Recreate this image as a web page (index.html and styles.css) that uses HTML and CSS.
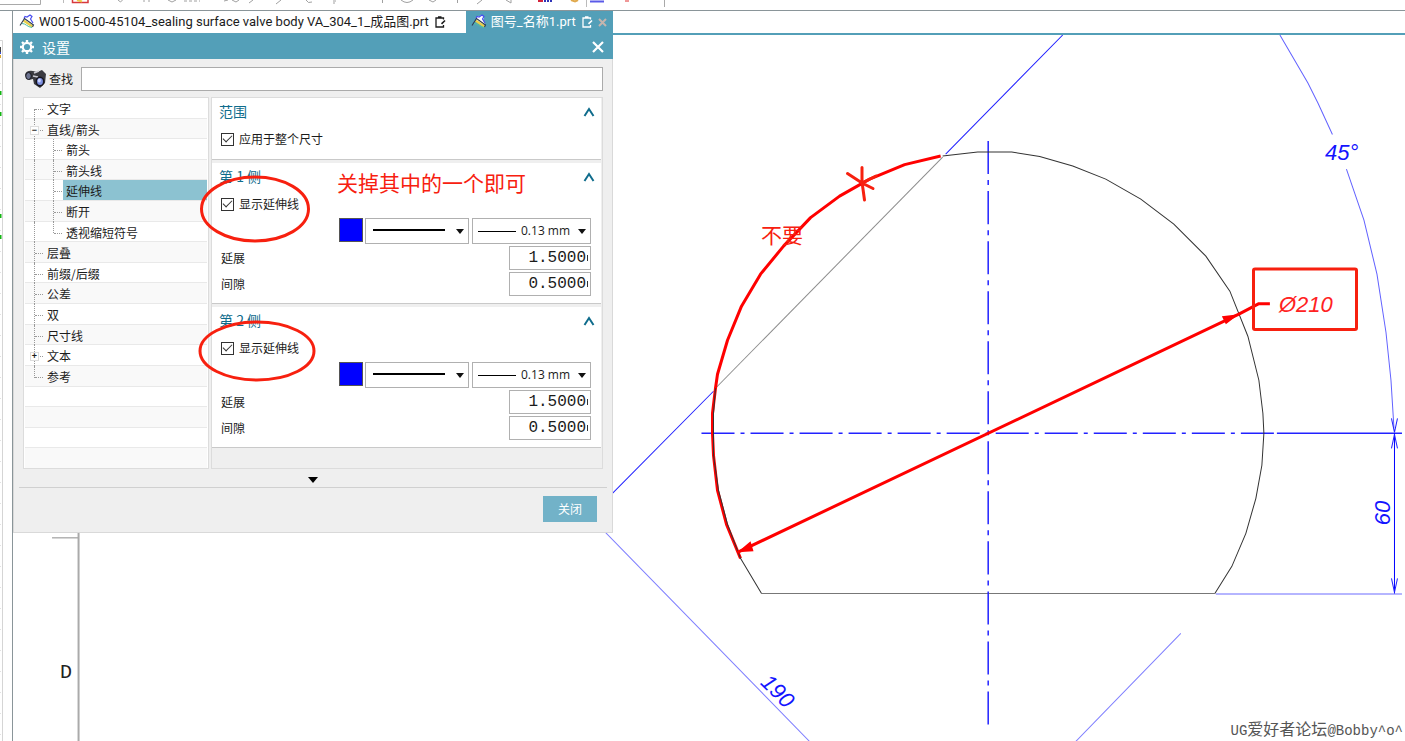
FILE: index.html
```html
<!DOCTYPE html>
<html lang="zh-CN">
<head>
<meta charset="utf-8">
<meta name="viewport" content="width=device-width, initial-scale=1">
<title>设置</title>
<link rel="stylesheet" href="styles.css">
</head>
<body>
<svg width="0" height="0" class="defs" aria-hidden="true">
  <symbol id="part" viewBox="0 0 16 16">
    <path d="M6 3l5-2 2 3-1 2 2 4-4 1-5-5z" fill="#fff"/>
    <path d="M5 4.500l1-2 2 .5 3-2 2 1.500-1.500 2.500 2.500 4" stroke="#4a4ff0" stroke-width="1.200" fill="none"/>
    <path d="M4.500 6.500l9 6" stroke="#e8cf4a" stroke-width="2.200" fill="none"/>
    <path d="M1 11.500L5.500 4.500l9 6.500-1 2" stroke="#2e3a52" stroke-width="1.100" fill="none"/>
    <path d="M3 9.500c4 0 5 3.500 10 4" stroke="#4fc0a0" stroke-width="1" fill="none"/>
  </symbol>
  <symbol id="modified" viewBox="0 0 12 12">
    <path d="M9.500 9v2h-7.500v-9h7.500v1.500M4 .8h3.500" stroke="currentColor" stroke-width="1.300" fill="none"/>
    <path d="M11 4.500L7.500 7.800" stroke="currentColor" stroke-width="1.600" fill="none"/>
  </symbol>
  <symbol id="up" viewBox="0 0 12 10">
    <path d="M1.500 9L6 2l4.500 7" stroke="#0f6c8c" stroke-width="2" fill="none"/>
  </symbol>
</svg>

<div class="app">
  <header class="toolbar">
    <svg width="700" height="10" viewBox="0 0 700 10" fill="none">
      <path d="M0 4.500H40.500V0M664.500 0V7" stroke="#a9a9a9"/>
      <path d="M63.500 0V3M586.500 0V7" stroke="#bbb"/>
      <path d="M72.500 0V2.500H88V0" stroke="#d8383c" stroke-width="1.500"/>
      <path d="M77 0l5 1.500" stroke="#eecb4b" stroke-width="2"/>
      <path d="M118 0l2.500 2 2-2M144 2V0M149 2V0M168 0l4 2 4-2M224 1l4-1M232 0l4 2 3-2M253 0l-4 3M281 0l-5 4M306 0q2 4 6 2M333 1h3M333 3h2M382.500 0V3M401 0q6 5 12 0M429 0l4 2 3-2M457.500 0V3M482 0l-5 4M506 0l5 3V0" stroke="#a0a0a0"/>
      <path d="M184 1h16" stroke="#a0a0a0" stroke-dasharray="3 2"/>
      <path d="M538 1h5" stroke="#d4223a" stroke-width="2"/><path d="M544 1h9" stroke="#2f34b8" stroke-width="2" stroke-dasharray="2 1"/>
      <path d="M571 0l4 1.500 3-1.500" stroke="#e0a94c" stroke-width="2"/>
      <path d="M590 1.500h14" stroke="#5a5ae8" stroke-width="2"/>
      <path d="M625 1h4" stroke="#e03030"/>
    </svg>
  </header>

  <div class="main">
    <aside class="rail">
      <svg width="13" height="730" viewBox="0 0 13 730" fill="none">
        <path d="M0 29.500H2.500V730" stroke="#d5d5d5"/>
        <path d="M0 36v5M0 42v1" stroke="#444" stroke-width="2"/><path d="M0 44v3" stroke="#d9a52e" stroke-width="2"/><path d="M0 41v2" stroke="#3b4dc4" stroke-width="2"/>
        <path d="M0 80v4M0 101v4M0 203v4M0 224v4" stroke="#13b513" stroke-width="3"/>
        <path d="M.5 72V730" stroke="#e2e2e2" stroke-dasharray="1 20"/>
      </svg>
    </aside>

    <section class="work">
      <nav class="tabs">
        <a class="tab" href="#part1"><svg width="16" height="16"><use href="#part"/></svg><span>W0015-000-45104_sealing surface valve body VA_304_1_成品图.prt</span><svg width="12" height="12"><use href="#modified"/></svg></a>
        <a class="tab active" href="#part2"><svg width="16" height="16"><use href="#part"/></svg><span>图号_名称1.prt</span><svg width="12" height="12"><use href="#modified"/></svg><svg class="tabx" width="9" height="9" viewBox="0 0 9 9"><path d="M1 1l7 7M8 1L1 8" stroke="#c4b5ae" stroke-width="2"/></svg></a>
      </nav>

      <div class="canvas">
        <svg class="drawing" viewBox="14 35 1391 706" preserveAspectRatio="xMinYMin meet" fill="none">
          <g stroke="#8c8c8c">
            <path d="M53 537.500H80"/>
            <path d="M79.500 532V741" stroke="#aaa" stroke-width="2"/>
            <path d="M943 157L716 388"/>
            <path d="M762 593H1215" stroke="#777"/>
          </g>
          <text class="zone" x="61" y="678">D</text>
          <g stroke="#2222ff">
            <path d="M1063 35L946 154M714 391L613 493"/>
            <path d="M606 532L810 741M1181 633L1076 741" stroke="#8080ff"/>
            <path d="M1216 593.500H1402" stroke="#9c9cff" stroke-width="1.500"/>
            <path d="M1280 35L1308 83L1318 103L1332.500 134.500M1346.500 169L1364 220L1377 274L1386 332L1391 380L1394 428" stroke="#6262ff"/>
            <path d="M988.500 141V725" stroke-width="1.500" stroke-dasharray="33 6 5 6"/>
            <path d="M702 433H1274" stroke-width="1.500" stroke-dasharray="33 6 4 6"/>
            <path d="M1277 433H1402" stroke-width="1.500"/>
            <path d="M1394.500 433V593" stroke="#0000ff"/>
            <path d="M1391.500 418l3 14 3-14M1391.500 448l3-14 3 14M1391.500 578l3 14 3-14"/>
          </g>
          <path d="M943 156L978 152H1012L1040 156.500L1073 166L1106 179L1141 199L1174 224L1206 256L1230 291L1248 336L1259 380L1263 413L1264 433L1262 465L1256 498L1246 533L1232 566L1215 593" stroke="#333"/>
          <path class="red" d="M941 156L905 164.500L870 179L840 196L811 217.500L784 246L761 274L742 306L728 340L718 374L716 388L713 413V433L714 455L718 490L727 524L741 558"/>
          <path d="M716 388L714 413V455L719 490L728 524L741 558L762 593" stroke="#333"/>
          <path class="red" d="M738 552L1239 314L1259 303.500H1270"/>
          <path d="M738 552l16-1-3-10zM1239 314l-13 10-4-8z" fill="#f00"/>
          <g class="dim">
            <text x="1325" y="160">45°</text>
            <text transform="translate(1390 525) rotate(-90)">60</text>
            <text transform="translate(760 683) rotate(45)">190</text>
            <text class="dia" x="1279" y="312">Ø210</text>
          </g>
        </svg>
        <p class="watermark">UG<span>爱好者论坛</span>@Bobby^o^</p>
      </div>
    </section>
  </div>

  <form class="dialog" aria-label="设置">
    <div class="title">
      <svg width="16" height="16" viewBox="0 0 16 16" fill="none" stroke="#fff"><circle cx="8" cy="8" r="4.200" stroke-width="2.200"/><path d="M8 1v2M8 13v2M1 8h2M13 8h2M3 3l1.500 1.500M11.500 11.500L13 13M13 3l-1.500 1.500M4.500 11.500L3 13" stroke-width="2.400"/></svg>
      <h1>设置</h1>
      <button type="button" class="close" aria-label="关闭对话框"><svg width="14" height="14" viewBox="0 0 14 14"><path d="M2 2l10 10M12 2L2 12" stroke="#fff" stroke-width="2.200"/></svg></button>
    </div>
    <div class="search">
      <svg width="24" height="20" viewBox="0 0 24 20">
        <path d="M1 6Q2 1 9 2l4 1 5-2 4 4-1 9-5 5-6-4-1-5-4 1z" fill="#3a3a40"/>
        <path d="M10 4l5-2M9 7l5 1" stroke="#c9c9d2" stroke-width="1.500"/>
        <ellipse cx="4.500" cy="7" rx="2.800" ry="3.500" fill="#6c7390" stroke="#15151c"/>
        <ellipse cx="16" cy="12.500" rx="3.700" ry="4.300" fill="#7d8fe0" stroke="#15151c" stroke-width="1.500"/>
        <ellipse cx="15.300" cy="11.500" rx="1.500" ry="2" fill="#ccd5ff"/>
      </svg>
      <label for="find">查找</label>
      <input id="find" type="text">
    </div>
    <div class="panes">
      <ul class="tree">
        <li><i class="g first"></i><span>文字</span></li>
        <li><i class="g tee"><button type="button" aria-label="折叠">−</button></i><span>直线/箭头</span></li>
        <li><i class="g pass"></i><i class="g tee"></i><span>箭头</span></li>
        <li><i class="g pass"></i><i class="g tee"></i><span>箭头线</span></li>
        <li><i class="g pass"></i><i class="g tee"></i><span class="selected">延伸线</span></li>
        <li><i class="g pass"></i><i class="g tee"></i><span>断开</span></li>
        <li><i class="g pass"></i><i class="g last"></i><span>透视缩短符号</span></li>
        <li><i class="g tee"></i><span>层叠</span></li>
        <li><i class="g tee"></i><span>前缀/后缀</span></li>
        <li><i class="g tee"></i><span>公差</span></li>
        <li><i class="g tee"></i><span>双</span></li>
        <li><i class="g tee"></i><span>尺寸线</span></li>
        <li><i class="g tee"><button type="button" aria-label="展开">+</button></i><span>文本</span></li>
        <li><i class="g last"></i><span>参考</span></li>
        <li></li><li></li><li></li><li></li>
      </ul>
      <div class="groups">
        <section class="group">
          <h2>范围<button type="button" aria-label="收起范围"><svg width="12" height="10"><use href="#up"/></svg></button></h2>
          <label class="check"><input type="checkbox" checked>应用于整个尺寸</label>
        </section>
        <section class="group">
          <h2>第 1 侧<button type="button" aria-label="收起第 1 侧"><svg width="12" height="10"><use href="#up"/></svg></button></h2>
          <label class="check"><input type="checkbox" checked>显示延伸线</label>
          <div class="style">
            <button type="button" class="swatch" aria-label="颜色"></button>
            <div class="combo font"><select aria-label="线型"><option></option></select></div>
            <div class="combo width"><select aria-label="线宽"><option>0.13 mm</option></select></div>
          </div>
          <div class="field"><label for="e1">延展</label><div class="num"><input id="e1" type="text" value="1.5000"></div></div>
          <div class="field"><label for="g1">间隙</label><div class="num"><input id="g1" type="text" value="0.5000"></div></div>
        </section>
        <section class="group">
          <h2>第 2 侧<button type="button" aria-label="收起第 2 侧"><svg width="12" height="10"><use href="#up"/></svg></button></h2>
          <label class="check"><input type="checkbox" checked>显示延伸线</label>
          <div class="style">
            <button type="button" class="swatch" aria-label="颜色"></button>
            <div class="combo font"><select aria-label="线型"><option></option></select></div>
            <div class="combo width"><select aria-label="线宽"><option>0.13 mm</option></select></div>
          </div>
          <div class="field"><label for="e2">延展</label><div class="num"><input id="e2" type="text" value="1.5000"></div></div>
          <div class="field"><label for="g2">间隙</label><div class="num"><input id="g2" type="text" value="0.5000"></div></div>
        </section>
      </div>
    </div>
    <div class="more"><svg width="10" height="6" viewBox="0 0 10 6"><path d="M0 0h10L5 6z"/></svg></div>
    <div class="footer"><button type="button">关闭</button></div>
  </form>

  <svg class="markup" viewBox="0 0 1405 741" preserveAspectRatio="xMinYMin meet" fill="none" stroke="#f7200f" stroke-width="3">
    <ellipse cx="255" cy="209" rx="53.500" ry="32"/>
    <ellipse cx="257" cy="351" rx="57" ry="29"/>
    <rect x="1253.500" y="269" width="103" height="60.500" rx="1.500"/>
    <path d="M862 167.500V182L864.500 200M847.500 173.500L862 183L873 188.500M862 183L876 176" stroke-linecap="round"/>
    <text x="337" y="191">关掉其中的一个即可</text>
    <text x="761" y="243">不要</text>
  </svg>
</div>
</body>
</html>
```
FILE: styles.css
```css
* { box-sizing: border-box; }
body {
  margin: 0;
  background: #fff;
  color: #1b1b1b;
  font: 12px/16px "Noto Sans CJK SC", sans-serif;
}
button, input, select { font: inherit; color: inherit; margin: 0; padding: 0; }
svg { display: block; flex: none; }
.defs { position: absolute; }

.app {
  position: relative;
  display: flex;
  flex-direction: column;
  height: 100vh;
  overflow: hidden;
}
.toolbar { flex: none; height: 11px; border-bottom: 1px solid #8a9599; overflow: hidden; }
.main { flex: 1; display: flex; min-height: 0; }
.rail { flex: none; width: 13px; border-right: 1px solid #8a9599; overflow: hidden; }
.work { flex: 1; min-width: 0; display: flex; flex-direction: column; }

.tabs { display: flex; flex: none; height: 24px; border-bottom: 2px solid #539fb8; }
.tab {
  display: flex;
  align-items: center;
  padding: 0 20px 0 6px;
  color: #1b1b1b;
  text-decoration: none;
  white-space: nowrap;
  font-size: 13px;
  font-family: Roboto, "Noto Sans CJK SC", sans-serif;
}
.tab span { margin: 0 5px 0 4px; }
.tab.active { background: #539fb8; color: #fff; padding: 0 6px 0 5px; }
.tabx { margin-left: 5px; }

.canvas { position: relative; flex: 1; min-height: 0; overflow: hidden; }
.drawing { width: 100%; height: auto; }
.red { stroke: #f00; stroke-width: 3; stroke-linejoin: round; }
.zone { font: 20px "Liberation Mono", monospace; fill: #222; }
.dim { font: italic 22px "Liberation Sans", sans-serif; fill: #1414ff; }
.dia { fill: #f22; }
.watermark {
  position: absolute;
  right: 2px;
  bottom: 1px;
  margin: 0;
  color: #555;
  font: 14px/18px "Liberation Mono", "Noto Sans CJK SC", monospace;
}
.watermark span { font-size: 16px; }

.dialog {
  position: absolute;
  left: 13px;
  top: 34px;
  width: 600px;
  background: #efefef;
  border: solid #d9d9d9;
  border-width: 0 1px 1px;
}
.title {
  display: flex;
  align-items: center;
  height: 25px;
  margin: 0 -1px;
  padding: 0 8px 0 6px;
  background: #539fb8;
  color: #fff;
}
.title h1 { flex: 1; margin: 0 0 0 7px; font-size: 14px; font-weight: 400; line-height: 20px; }
.close { border: 0; background: none; }

.search { display: flex; align-items: center; padding: 8px 9px 6px 10px; }
.search label { margin: 0 8px 0 1px; }
.search input { flex: 1; height: 24px; border: 1px solid #ababab; background: #fff; padding: 0 4px; }

.panes { display: flex; gap: 2px; margin: 0 9px; }
.tree {
  display: flex;
  flex-direction: column;
  flex: none;
  width: 186px;
  margin: 0;
  padding: 0 1px;
  list-style: none;
  border: 1px solid #dcdcdc;
  background: #fff;
}
.tree li { display: flex; flex: 1; min-height: 0; border-bottom: 1px solid #e9e9e9; line-height: 22px; }
.tree li:last-child { border: 0; }
.tree li:nth-child(even) { background: #f9f9f9; }
.tree li > span { flex: 1; padding-left: 3px; white-space: nowrap; }
.tree .selected { background: #8cc2d1; }
.g { position: relative; width: 19px; font-style: normal; }
.g::before, .g::after { content: ""; position: absolute; }
.g::before { left: 9px; top: 0; bottom: -1px; border-left: 1px dotted #999; }
.g::after { left: 10px; right: 1px; top: 11px; border-top: 1px dotted #999; }
.g.first::before { top: 11px; }
.g.last::before { bottom: 8px; }
.g.pass::after { display: none; }
.g button {
  position: absolute;
  z-index: 1;
  left: 5px;
  top: 7px;
  width: 9px;
  height: 9px;
  border: 1px solid #ddd;
  background: #fff;
  font: bold 9px/7px "Liberation Sans", sans-serif;
}

.groups {
  flex: 1;
  display: flex;
  flex-direction: column;
  gap: 3px;
  padding: 0 1px 20px 0;
  border: 1px solid #dcdcdc;
}
.group { padding: 0 10px 6px 8px; background: #fff; border-bottom: 1px solid #c9c9c9; }
.group h2 {
  display: flex;
  align-items: center;
  justify-content: space-between;
  margin: 0 -4px 0 -1px;
  color: #0f6c8c;
  font-size: 14px;
  font-weight: 400;
  line-height: 27px;
}
.group h2 button { border: 0; background: none; }
.check { display: flex; align-items: center; gap: 5px; height: 28px; }
.check input {
  appearance: none;
  display: grid;
  place-items: center;
  width: 13px;
  height: 13px;
  margin-left: 1px;
  border: 1px solid #333;
  background: #fff;
}
.check input:checked::after {
  content: "";
  width: 8px;
  height: 4px;
  margin-bottom: 3px;
  border: solid #333;
  border-width: 0 0 1px 1px;
  transform: rotate(-45deg);
}
.style { display: flex; justify-content: flex-end; gap: 3px; height: 27px; }
.swatch { width: 24px; height: 24px; margin-right: -1px; border: 1px solid #555; background: #00f; }
.combo { position: relative; display: flex; height: 26px; }
.font { width: 104px; }
.width { width: 119px; }
.combo select {
  appearance: none;
  width: 100%;
  border: 1px solid #b0b0b0;
  border-radius: 0;
  background: #fff;
  padding-left: 48px;
  font-family: "Open Sans", sans-serif;
}
.combo::before, .combo::after { content: ""; position: absolute; pointer-events: none; }
.combo::before { left: 8px; top: 11px; width: 72px; height: 2px; background: #000; }
.width::before { left: 6px; top: 13px; width: 38px; height: 1px; }
.combo::after {
  right: 5px;
  top: 11px;
  border: 4px solid transparent;
  border-top: 5px solid #111;
  border-bottom: 0;
}
.field { display: flex; align-items: center; justify-content: space-between; height: 26px; }
.field label { padding-left: 1px; }
.num { position: relative; width: 82px; }
.num input {
  display: block;
  width: 100%;
  height: 24px;
  border: 1px solid #b0b0b0;
  background: #fff;
  padding-right: 4px;
  text-align: right;
  font: 16px "Liberation Mono", monospace;
}
.num::after { content: ""; position: absolute; right: 3px; top: 9px; height: 6px; border-right: 1px solid #333; }

.more { display: flex; justify-content: center; padding: 8px 0 4px; }
.footer { display: flex; justify-content: flex-end; margin: 0 5px; padding: 8px 10px 10px; border-top: 1px solid #d0d0d0; }
.footer button { width: 54px; height: 26px; border: 0; background: #72b2c8; color: #fff; }

.markup { position: absolute; left: 0; top: 0; width: 100%; height: auto; pointer-events: none; }
.markup text { font: 21px "Noto Sans CJK SC", sans-serif; fill: #f7200f; stroke: none; }
```
